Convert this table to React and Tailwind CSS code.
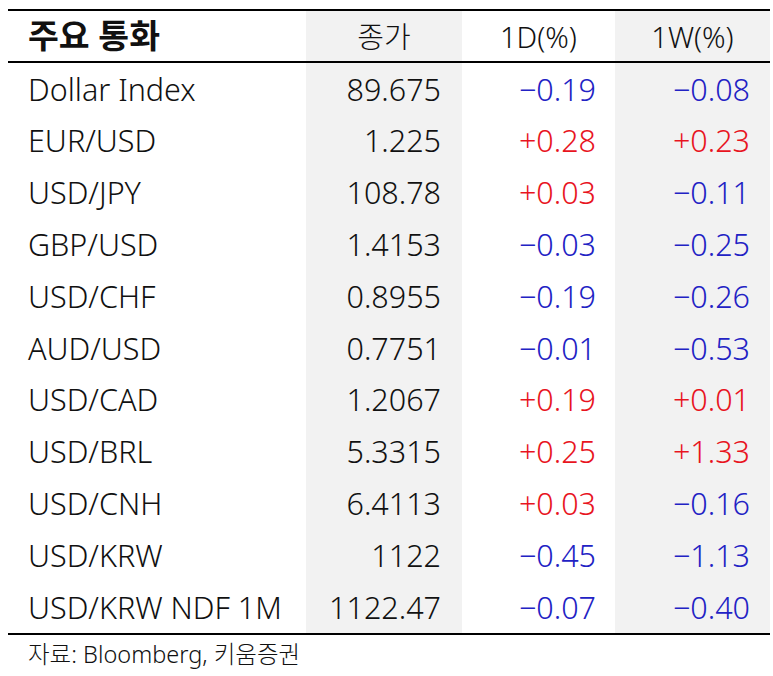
import React from "react";

const rows = [
  ["Dollar Index", "89.675", "-0.19", "-0.08"],
  ["EUR/USD", "1.225", "+0.28", "+0.23"],
  ["USD/JPY", "108.78", "+0.03", "-0.11"],
  ["GBP/USD", "1.4153", "-0.03", "-0.25"],
  ["USD/CHF", "0.8955", "-0.19", "-0.26"],
  ["AUD/USD", "0.7751", "-0.01", "-0.53"],
  ["USD/CAD", "1.2067", "+0.19", "+0.01"],
  ["USD/BRL", "5.3315", "+0.25", "+1.33"],
  ["USD/CNH", "6.4113", "+0.03", "-0.16"],
  ["USD/KRW", "1122", "-0.45", "-1.13"],
  ["USD/KRW NDF 1M", "1122.47", "-0.07", "-0.40"],
];

function Val({ v }) {
  const neg = v.startsWith("-");
  const txt = neg ? "\u2212" + v.slice(1) : v;
  return <span className={neg ? "text-[#2222c4]" : "text-[#e8141e]"}>{txt}</span>;
}

export default function App() {
  return (
    <div
      className="w-[773px] h-[676px] bg-white pt-[9px] pl-[8px] text-[#111] font-light"
      style={{ fontFamily: '"Noto Sans", "Noto Sans CJK KR", sans-serif' }}
    >
      <div className="w-[762px]">
        <div className="border-t-2 border-b-2 border-black">
          <div className="grid grid-cols-[298px_156px_153px_155px] h-[50px] text-[29px] leading-none">
            <div className="flex items-center pl-[20px] text-[33.5px] font-semibold">주요 통화</div>
            <div className="flex items-center justify-center bg-[#f2f2f2]">종가</div>
            <div className="flex items-center justify-center">1D(%)</div>
            <div className="flex items-center justify-center bg-[#f2f2f2]">1W(%)</div>
          </div>
        </div>
        <div className="border-b-2 border-black">
          {rows.map((r) => (
            <div key={r[0]} className="grid grid-cols-[298px_156px_153px_155px] h-[51.8px] text-[30.5px] leading-none">
              <div className="flex items-center pl-[20px]">{r[0]}</div>
              <div className="flex items-center justify-end pr-[21px] bg-[#f2f2f2]">{r[1]}</div>
              <div className="flex items-center justify-end pr-[19px]"><Val v={r[2]} /></div>
              <div className="flex items-center justify-end pr-[20px] bg-[#f2f2f2]"><Val v={r[3]} /></div>
            </div>
          ))}
        </div>
        <div className="pl-[20px] pt-[8px] text-[23.5px] leading-none">자료: Bloomberg, 키움증권</div>
      </div>
    </div>
  );
}
